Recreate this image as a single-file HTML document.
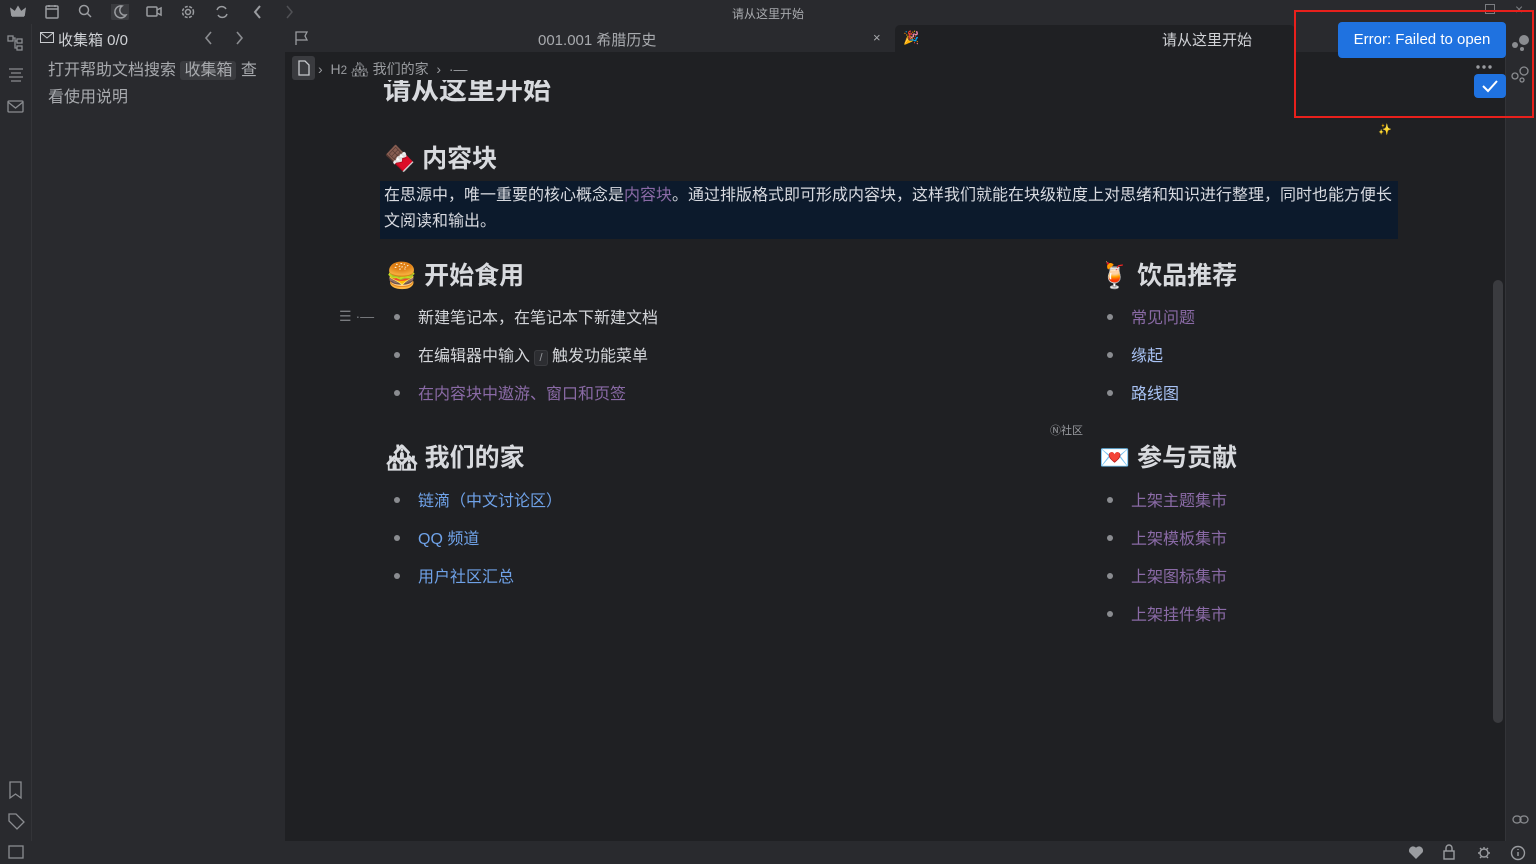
<!DOCTYPE html>
<html><head><meta charset="utf-8"><style>
*{margin:0;padding:0;box-sizing:border-box}
body{width:1536px;height:864px;overflow:hidden;background:#1f2023;font-family:"Liberation Sans","Noto Sans CJK SC",sans-serif;color:#d4d6da;position:relative}
.a{position:absolute}
.h{font-size:25px;font-weight:bold;color:#d8dade;white-space:nowrap}
.li{position:absolute;font-size:16px;white-space:nowrap}
.dot{position:absolute;width:6px;height:6px;border-radius:3px;background:#8a8c90}
.pu{color:#8a6aa6}.bl{color:#6fa2e8}
</style></head><body>
<div class="a" style="left:0;top:0;width:1536px;height:24px;background:#292a2e"></div>
<div class="a" style="left:0;top:24px;width:32px;height:817px;background:#292a2e;border-right:1px solid #333438"></div>
<div class="a" style="left:32px;top:24px;width:253px;height:817px;background:#292a2e"></div>
<div class="a" style="left:285px;top:24px;width:1220px;height:28px;background:#292a2e"></div>
<div class="a" style="left:895px;top:25px;width:400px;height:27px;background:#1f2023;border-radius:5px 5px 0 0"></div>
<div class="a" style="left:1505px;top:24px;width:31px;height:817px;background:#292a2e;border-left:1px solid #333438"></div>
<div class="a" style="left:0;top:841px;width:1536px;height:23px;background:#292a2e"></div>
<div class="a" style="left:0;top:4px;width:300px">
<svg width="300" height="16"><g fill="none" stroke="#9a9ca0" stroke-width="1.5">
<path d="M12 12h12M12 12l-1-7 4 3 3-5 3 5 4-3-1 7" fill="#9a9ca0"/>
<rect x="46" y="2" width="12" height="12" rx="1"/><path d="M46 5h12M49 1v2M55 1v2"/>
<circle cx="84" cy="6" r="4.5"/><path d="M87 9l4 4"/>
<rect x="111" y="-3" width="18" height="20" rx="3" fill="#3a3b3f" stroke="none"/>
<path d="M122 2a6 6 0 1 0 4 9a5 5 0 0 1-4-9z"/>
<rect x="147" y="3" width="10" height="9" rx="1"/><path d="M157 6l4-2v7l-4-2"/>
<circle cx="188" cy="8" r="2.5"/><circle cx="188" cy="8" r="5.5" stroke-dasharray="3 1.5"/>
<path d="M217 6a5 5 0 0 1 9-1M227 10a5 5 0 0 1-9 1"/>
<path d="M260 2l-5 6 5 6" stroke-width="2"/><path d="M287 2l5 6-5 6" stroke="#505155"/>
</g></svg></div>
<div class="a" style="left:0;top:5px;width:1536px;text-align:center;font-size:12px;color:#a8aaae">请从这里开始</div>
<div class="a" style="left:1485px;top:4px;width:10px;height:10px;border:1px solid #7a7c80"></div>
<div class="a" style="left:1515px;top:1px;font-size:14px;color:#7a7c80">×</div>
<svg class="a" style="left:40px;top:32px" width="14" height="12"><rect x=".5" y=".5" width="13" height="10" fill="none" stroke="#c8cace"/><path d="M1 1l6 5 6-5" fill="none" stroke="#c8cace"/></svg>
<div class="a" style="left:58px;top:29px;font-size:15px;color:#d0d2d6">收集箱 0/0</div>
<svg class="a" style="left:200px;top:30px" width="50" height="16"><path d="M11 2l-5 6 5 6M37 2l5 6-5 6" fill="none" stroke="#8a8c90" stroke-width="1.6"/></svg>
<div class="a" style="left:48px;top:57px;width:222px;font-size:16px;line-height:27px;color:#a8aaae">打开帮助文档搜索 <span style="background:#3a3b3f;padding:1px 4px;border-radius:3px">收集箱</span> 查看使用说明</div>
<svg class="a" style="left:294px;top:30px" width="16" height="16"><path d="M2 15V2h11l-2 4 2 4H2" fill="none" stroke="#9a9ca0" stroke-width="1.3"/></svg>
<div class="a" style="left:538px;top:29px;font-size:15px;color:#a8aaae">001.001 希腊历史</div>
<div class="a" style="left:873px;top:30px;font-size:13px;color:#a8aaae">×</div>
<div class="a" style="left:903px;top:30px;font-size:13px">🎉</div>
<div class="a" style="left:1162px;top:29px;font-size:15px;color:#d0d2d6">请从这里开始</div>
<div class="a" style="left:383px;top:80px;height:24px;overflow:hidden"><div class="h" style="font-size:28px;margin-top:-12px">请从这里开始</div></div>
<div class="a" style="left:292px;top:56px;width:23px;height:24px;background:#3a3b3f;border-radius:3px"></div>
<svg class="a" style="left:297px;top:60px" width="14" height="16"><path d="M2 1h6l4 4v10H2z" fill="none" stroke="#c8cace" stroke-width="1.3"/></svg>
<div class="a" style="left:318px;top:59px;font-size:14px;color:#9a9ca0;white-space:nowrap">›&nbsp; H<small>2</small> 🏘 我们的家 &nbsp;›&nbsp; ·—</div>
<div class="a h" style="left:384px;top:139px">🍫 内容块</div>
<div class="a" style="left:380px;top:181px;width:1018px;height:58px;background:#0c1a2c"></div>
<div class="a" style="left:384px;top:183px;width:1012px;font-size:16px;line-height:26px;color:#d8dae0">在思源中，唯一重要的核心概念是<span class="pu">内容块</span>。通过排版格式即可形成内容块，这样我们就能在块级粒度上对思绪和知识进行整理，同时也能方便长文阅读和输出。</div>
<div class="a h" style="left:386px;top:256px">🍔 开始食用</div>
<div class="a h" style="left:1099px;top:256px">🍹 饮品推荐</div>
<div class="a" style="left:339px;top:308px;font-size:14px;color:#7a7c80">☰ ·—</div>
<div class="dot" style="left:394px;top:314px"></div><div class="li" style="left:418px;top:304px">新建笔记本，在笔记本下新建文档</div>
<div class="dot" style="left:394px;top:352px"></div><div class="li" style="left:418px;top:342px">在编辑器中输入 <span style="font-size:11px;background:#2c2d31;border:1px solid #3a3b3f;border-radius:3px;padding:1px 4px;color:#9a9ca0">/</span> 触发功能菜单</div>
<div class="dot" style="left:394px;top:390px"></div><div class="li pu" style="left:418px;top:380px">在内容块中遨游、窗口和页签</div>
<div class="dot" style="left:1107px;top:314px"></div><div class="li pu" style="left:1131px;top:304px">常见问题</div>
<div class="dot" style="left:1107px;top:352px"></div><div class="li" style="left:1131px;top:342px;color:#a9c3f5">缘起</div>
<div class="dot" style="left:1107px;top:390px"></div><div class="li" style="left:1131px;top:380px;color:#a9c3f5">路线图</div>
<div class="a" style="left:1050px;top:422px;font-size:11px;color:#9a9ca0">Ⓝ社区</div>
<div class="a h" style="left:386px;top:438px">🏘 我们的家</div>
<div class="a h" style="left:1099px;top:438px">💌 参与贡献</div>
<div class="dot" style="left:394px;top:497px"></div><div class="li bl" style="left:418px;top:487px">链滴（中文讨论区）</div>
<div class="dot" style="left:394px;top:535px"></div><div class="li bl" style="left:418px;top:525px">QQ 频道</div>
<div class="dot" style="left:394px;top:573px"></div><div class="li bl" style="left:418px;top:563px">用户社区汇总</div>
<div class="dot" style="left:1107px;top:497px"></div><div class="li pu" style="left:1131px;top:487px">上架主题集市</div>
<div class="dot" style="left:1107px;top:535px"></div><div class="li pu" style="left:1131px;top:525px">上架模板集市</div>
<div class="dot" style="left:1107px;top:573px"></div><div class="li pu" style="left:1131px;top:563px">上架图标集市</div>
<div class="dot" style="left:1107px;top:611px"></div><div class="li pu" style="left:1131px;top:601px">上架挂件集市</div>
<div class="a" style="left:1378px;top:123px;font-size:11px">✨</div>
<div class="a" style="left:1493px;top:280px;width:10px;height:443px;background:#3a3b3f;border-radius:5px"></div>
<svg class="a" style="left:6px;top:34px" width="22" height="830"><g fill="none" stroke="#8a8c90" stroke-width="1.3">
<rect x="2" y="2" width="5" height="5"/><rect x="11" y="5" width="5" height="4"/><rect x="11" y="12" width="5" height="4"/><path d="M7 4h2v10h2M9 7h2"/>
<path d="M3 35h14M5 39h10M3 43h14M5 47h10"/>
<rect x="2" y="67" width="15" height="11" rx="1"/><path d="M2 68l7.5 6 7.5-6"/>
<path d="M4 748h11v16l-5.5-4-5.5 4z"/>
<path d="M3 780v7l8 8 7-7-8-8z"/>
<rect x="3" y="812" width="14" height="12"/>
</g></svg>
<svg class="a" style="left:1510px;top:34px" width="22" height="790"><g fill="#8a8c90">
<circle cx="14" cy="6" r="5"/><circle cx="5" cy="11" r="3"/><circle cx="12" cy="15" r="2"/></g>
<g fill="none" stroke="#8a8c90" stroke-width="1.3"><circle cx="14" cy="37" r="4"/><circle cx="5" cy="42" r="3"/><circle cx="12" cy="46" r="2"/>
<rect x="3" y="782" width="8" height="7" rx="3.5"/><rect x="10" y="782" width="8" height="7" rx="3.5"/></g></svg>
<div class="a" style="left:1294px;top:10px;width:240px;height:108px;border:2px solid #e8201c"></div>
<div class="a" style="left:1338px;top:22px;width:168px;height:36px;background:#1f72e0;border-radius:4px;color:#fff;font-size:15px;line-height:36px;text-align:center">Error: Failed to open</div>
<svg class="a" style="left:1475px;top:64px" width="18" height="6"><circle cx="3" cy="3" r="1.7" fill="#9a9ca0"/><circle cx="9" cy="3" r="1.7" fill="#9a9ca0"/><circle cx="15" cy="3" r="1.7" fill="#9a9ca0"/></svg>
<div class="a" style="left:1474px;top:74px;width:32px;height:24px;background:#1f72e0;border-radius:4px"></div>
<svg class="a" style="left:1481px;top:79px" width="18" height="14"><path d="M2 7l5 5 9-10" fill="none" stroke="#fff" stroke-width="2"/></svg>
<svg class="a" style="left:1406px;top:844px" width="130" height="18"><g fill="none" stroke="#9a9ca0" stroke-width="1.4">
<path d="M10 14l-6-6a3 3 0 0 1 6-3a3 3 0 0 1 6 3z" fill="#9a9ca0"/>
<rect x="38" y="7" width="10" height="8"/><path d="M40 7V4a3 3 0 0 1 6 0v3"/>
<circle cx="78" cy="9" r="4"/><path d="M72 9h2M82 9h2M78 3v2M74 4l2 2M82 4l-2 2M74 14l2-2M82 14l-2-2"/>
<circle cx="112" cy="9" r="6.5"/><path d="M112 8v4M112 5v1"/></g></svg>
</body></html>
